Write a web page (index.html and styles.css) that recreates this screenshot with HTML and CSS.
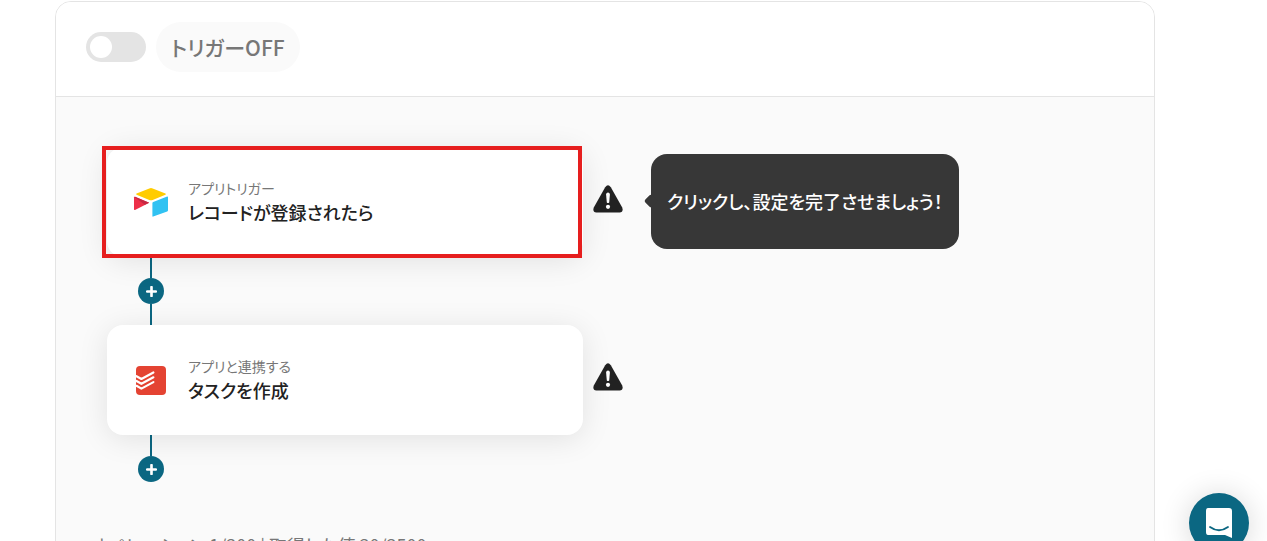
FILE: index.html
```html
<!DOCTYPE html>
<html lang="ja">
<head>
  <meta charset="UTF-8">
  <meta name="viewport" content="width=device-width, initial-scale=1.0">
  <title>フローボット</title>
  <link rel="stylesheet" href="styles.css">
</head>
<body>
  <svg width="0" height="0" class="sprite" aria-hidden="true">
    <symbol id="warning" viewBox="0 0 30 28">
      <path d="M12.2 2.2Q15-1.6 17.8 2.2L29.2 22.6Q30.8 27 26.6 27.6H3.4Q-.8 27 .8 22.6Z" fill="#222"/>
      <path d="M13.1 9.4Q13.2 7.6 15 7.6Q16.8 7.6 16.9 9.4L16.2 17.4Q15 18.8 13.8 17.4Z" fill="#fff"/>
      <circle cx="15" cy="21.8" r="2.1" fill="#fff"/>
    </symbol>
    <symbol id="plus" viewBox="0 0 10 10">
      <path d="M5 1V9M1 5H9" stroke="#fff" stroke-width="2.4" stroke-linecap="round"/>
    </symbol>
  </svg>

  <main class="panel">
    <header class="panel-header">
      <input type="checkbox" id="trigger" class="switch">
      <label for="trigger" class="trigger-label">トリガーOFF</label>
    </header>

    <div class="flow">
      <div class="step">
        <button class="card highlight">
          <svg class="app-icon" viewBox="0 0 36 36">
            <path d="M16.3 4.5Q18 3.7 19.7 4.5L32.4 9.6Q33.5 10.2 32.4 10.8L19.7 16Q18 16.6 16.3 16L3.6 10.8Q2.5 10.2 3.6 9.6Z" fill="#fc0"/>
            <path d="M19.4 19.1Q19.4 18.2 20.2 17.9L34.2 12.5Q35 12.3 35 13.2V26.2Q35 27 34.2 27.4L20.2 32.6Q19.4 32.8 19.4 32Z" fill="#31c2f2"/>
            <path d="M1 13.6Q1 12.5 2 12.8L16.2 18.8L2 25.9Q1 26.3 1 25.3Z" fill="#ed3049"/>
            <path d="M2 12.8L16.2 18.8L11.8 20.8L1.4 13Z" fill="#c62842"/>
          </svg>
          <span class="card-text">
            <span class="card-label">アプリトリガー</span>
            <span class="card-title">レコードが登録されたら</span>
          </span>
        </button>
        <svg class="warning"><use href="#warning"/></svg>
        <p class="tooltip">クリックし、設定を完了させましょう！</p>
      </div>

      <div class="connector">
        <button class="add" aria-label="追加"><svg><use href="#plus"/></svg></button>
      </div>

      <div class="step">
        <button class="card">
          <svg class="app-icon" viewBox="0 0 36 36">
            <rect x="3" y="4" width="30" height="29" rx="4" fill="#e44332"/>
            <path d="M3.5 14.2L8.4 17L20.4 10.5M3.5 19L8.4 21.8L20.4 15.3M3.5 23.8L8.4 26.6L20.4 20.1" fill="none" stroke="#fff" stroke-width="2.2" stroke-linecap="round" stroke-linejoin="round"/>
          </svg>
          <span class="card-text">
            <span class="card-label">アプリと連携する</span>
            <span class="card-title">タスクを作成</span>
          </span>
        </button>
        <svg class="warning"><use href="#warning"/></svg>
      </div>

      <div class="connector last">
        <button class="add" aria-label="追加"><svg><use href="#plus"/></svg></button>
      </div>
    </div>

    <footer class="usage">オペレーション 1/300 | 取得した値 30/3500</footer>
  </main>

  <button class="chat" aria-label="チャット">
    <svg viewBox="0 0 28 32">
      <path d="M3 1H24Q27 1 27 4V31L20 28H3Q1 28 1 25V4Q1 1 3 1Z" fill="#fff"/>
      <path d="M5 20Q14 26.5 23 20" fill="none" stroke="#0b6782" stroke-width="1.8" stroke-linecap="round"/>
    </svg>
  </button>
</body>
</html>
```

FILE: styles.css
```css
* {
  margin: 0;
  padding: 0;
  box-sizing: border-box;
}

body {
  height: 100vh;
  padding: 1px 112px 0 55px;
  background: #fff;
  color: #222;
  font-family: "Noto Sans CJK JP", sans-serif;
  font-feature-settings: "palt";
  overflow: hidden;
}

button {
  border: none;
  font: inherit;
  font-feature-settings: inherit;
  color: inherit;
  cursor: pointer;
}

.sprite {
  position: absolute;
}

.panel {
  background: #fafafa;
  border: 1px solid #e4e4e4;
  border-radius: 16px;
  overflow: hidden;
}

.panel-header {
  display: flex;
  align-items: center;
  gap: 10px;
  padding: 20px 30px 24px;
  background: #fff;
  border-bottom: 1px solid #e4e4e4;
}

.switch {
  appearance: none;
  width: 60px;
  height: 30px;
  padding: 4px;
  background: #e4e4e4;
  border-radius: 15px;
  cursor: pointer;
}

.switch::before {
  content: "";
  display: block;
  width: 22px;
  height: 22px;
  background: #fff;
  border-radius: 50%;
}

.switch:checked {
  background: #0b6782;
}

.switch:checked::before {
  margin-left: auto;
}

.trigger-label {
  padding: 0 15px;
  background: #fafafa;
  border-radius: 25px;
  color: #777;
  font-size: 21px;
  font-weight: 500;
  line-height: 50px;
}

/* flow */
.flow {
  padding: 50px 51px 28px;
}

.step {
  display: flex;
  align-items: center;
}

.card {
  position: relative;
  display: flex;
  align-items: center;
  gap: 19px;
  width: 476px;
  height: 110px;
  padding: 0 26px;
  background: #fff;
  border-radius: 16px;
  box-shadow: 0 4px 30px rgba(0, 0, 0, 0.1);
  text-align: left;
}

.highlight::after {
  content: "";
  position: absolute;
  inset: -1px 1px -1px -5px;
  border: 4px solid #e61e1e;
}

.app-icon {
  width: 36px;
  height: 36px;
}

.card-text {
  display: flex;
  flex-direction: column;
  padding-bottom: 4px;
}

.card-label {
  color: #777;
  font-size: 14px;
  line-height: 24px;
}

.card-title {
  font-size: 18px;
  font-weight: 500;
  line-height: 24px;
}

.warning {
  width: 30px;
  height: 28px;
  margin: 0 0 6px 10px;
}

.tooltip {
  position: relative;
  margin: 0 0 2px 28px;
  padding: 0 16px;
  background: #373737;
  border-radius: 16px;
  color: #fff;
  font-size: 18px;
  font-weight: 500;
  line-height: 95px;
}

.tooltip::before {
  content: "";
  position: absolute;
  top: 42px;
  left: -5px;
  width: 10px;
  height: 10px;
  background: #373737;
  border-radius: 2px;
  transform: rotate(45deg);
}

.connector {
  display: flex;
  flex-direction: column;
  align-items: center;
  width: 88px;
  height: 68px;
}

.connector::before,
.connector::after {
  content: "";
  flex: 1;
  width: 2px;
  background: #0b6782;
}

.connector.last::after {
  visibility: hidden;
}

.add {
  display: flex;
  align-items: center;
  justify-content: center;
  width: 26px;
  height: 26px;
  background: #0b6782;
  border-radius: 50%;
}

.add svg {
  width: 11px;
  height: 11px;
}

.usage {
  padding: 0 35px 30px;
  color: #777;
  font-size: 18px;
  line-height: 28px;
}

.chat {
  position: fixed;
  right: 18px;
  bottom: -12px;
  display: flex;
  align-items: center;
  justify-content: center;
  width: 60px;
  height: 60px;
  background: #0b6782;
  border-radius: 50%;
  box-shadow: 0 2px 30px rgba(0, 0, 0, 0.16);
}

.chat svg {
  width: 28px;
  height: 32px;
}
```
